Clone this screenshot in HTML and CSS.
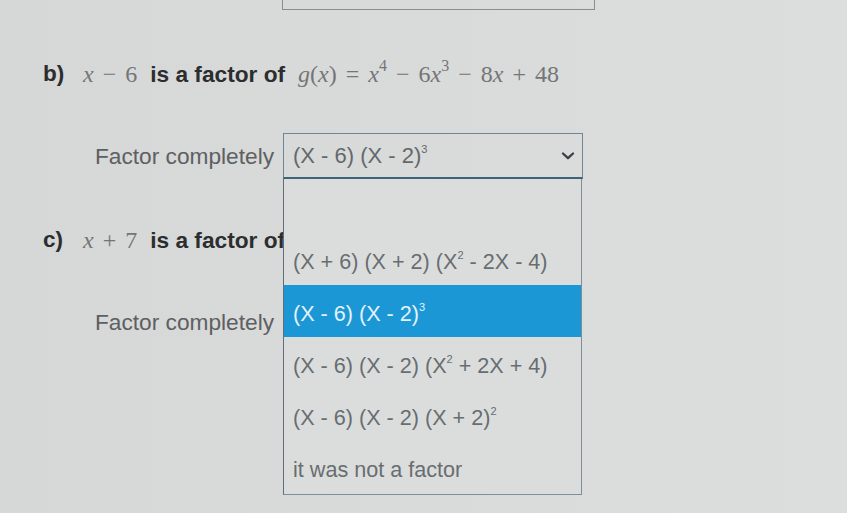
FILE: index.html
```html
<!DOCTYPE html>
<html>
<head>
<meta charset="utf-8">
<link rel="stylesheet" href="styles.css">
</head>
<body>
<div class="page">
  <div class="top-box"></div>

  <div class="qrow qrow-b">
    <span class="part">b)</span>
    <span class="math m-factor"><i>x</i><span class="op">−</span>6</span>
    <span class="bold-text">is a factor of</span>
    <span class="math m-poly"><i>g</i>(<i>x</i>)<span class="op">=</span><i>x</i><sup>4</sup><span class="op">−</span>6<i>x</i><sup>3</sup><span class="op">−</span>8<i>x</i><span class="op">+</span>48</span>
  </div>

  <div class="frow frow-1">
    <span class="label">Factor completely</span>
    <div class="select">
      <span class="select-value">(X - 6) (X - 2)<sup class="exp">3</sup></span>
      <svg class="chev" width="14" height="10" viewBox="0 0 14 10"><path d="M2 2.5 L7 7.2 L12 2.5" fill="none" stroke="#3c4246" stroke-width="2.4" stroke-linecap="round" stroke-linejoin="round"/></svg>
    </div>
  </div>

  <div class="qrow qrow-c">
    <span class="part">c)</span>
    <span class="math m-factor"><i>x</i><span class="op">+</span>7</span>
    <span class="bold-text">is a factor of</span>
  </div>

  <div class="frow frow-2">
    <span class="label">Factor completely</span>
  </div>

  <ul class="dropdown">
    <li class="opt opt-blank"></li>
    <li class="opt"><span>(X + 6) (X + 2) (X<sup class="exp">2</sup> - 2X - 4)</span></li>
    <li class="opt opt-active"><span>(X - 6) (X - 2)<sup class="exp">3</sup></span></li>
    <li class="opt"><span>(X - 6) (X - 2) (X<sup class="exp">2</sup> + 2X + 4)</span></li>
    <li class="opt"><span>(X - 6) (X - 2) (X + 2)<sup class="exp">2</sup></span></li>
    <li class="opt"><span>it was not a factor</span></li>
  </ul>
</div>
</body>
</html>
```

FILE: styles.css
```css
html, body {
  margin: 0;
  padding: 0;
}
body {
  width: 847px;
  height: 513px;
  overflow: hidden;
  background: linear-gradient(90deg, #d6d7d7 0%, #d9dada 50%, #dcdddd 100%);
  font-family: "Liberation Sans", Arial, sans-serif;
}
.page {
  position: relative;
  width: 847px;
  height: 513px;
}
.top-box {
  margin-left: 282px;
  width: 311px;
  height: 9px;
  border: 1px solid #8a8c8d;
  border-top: none;
}
.qrow {
  display: flex;
  align-items: center;
  height: 40px;
  padding-left: 43px;
  white-space: nowrap;
}
.qrow-b { margin-top: 44px; }
.qrow-c { margin-top: 41px; }
.part {
  font-weight: bold;
  font-size: 22.5px;
  color: #2b2d2e;
  width: 40px;
}
.bold-text {
  font-weight: bold;
  font-size: 22.7px;
  color: #2b2d2e;
  margin-left: 13px;
}
.math {
  font-family: "Liberation Serif", "Times New Roman", serif;
  font-size: 24px;
  color: #737577;
}
.math i { font-style: italic; }
.math sup {
  font-size: 16px;
  vertical-align: 11px;
  line-height: 0;
}
.math .op { margin: 0 9px; }
.m-poly { margin-left: 13px; }
.frow {
  display: flex;
  align-items: center;
  padding-left: 95px;
  white-space: nowrap;
}
.frow-1 { margin-top: 39px; }
.frow-2 { margin-top: 42px; height: 40px; }
.label {
  font-size: 22.7px;
  color: #5d6062;
  width: 188px;
}
.select {
  box-sizing: border-box;
  width: 300px;
  height: 46px;
  border: 1px solid #6f8794;
  border-bottom: 2px solid #3d6575;
  display: flex;
  align-items: center;
  justify-content: space-between;
  padding: 0 7px 0 9px;
}
.select-value {
  font-size: 22px;
  color: #63686b;
}
.exp {
  font-size: 11px;
  vertical-align: 10px;
  line-height: 0;
}
.chev { margin-top: 1px; }
.dropdown {
  position: absolute;
  left: 283px;
  top: 179px;
  width: 299px;
  box-sizing: border-box;
  margin: 0;
  padding: 0 0 1px 0;
  list-style: none;
  background: #dbdddd;
  border: 1px solid #7e8f99;
  border-top: none;
  border-left: 1.5px solid #5e6f79;
}
.opt {
  height: 52px;
  display: flex;
  align-items: center;
  padding-left: 9px;
  padding-top: 6px;
  box-sizing: border-box;
  font-size: 21.6px;
  color: #686d70;
  white-space: nowrap;
}
.opt-blank { height: 54px; }
.opt-active {
  background: #1c97d6;
  color: #e4f2fa;
}
```
